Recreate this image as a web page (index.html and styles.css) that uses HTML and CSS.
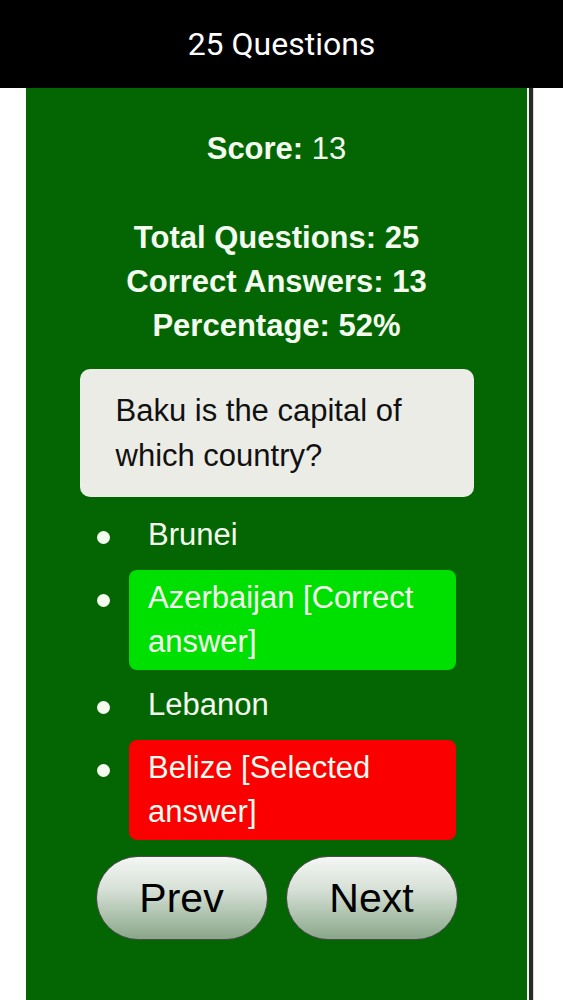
FILE: index.html
```html
<!DOCTYPE html>
<html>
<head>
<meta charset="utf-8">
<link rel="stylesheet" href="styles.css">
</head>
<body>
<header class="topbar">25 Questions</header>
<main class="panel">
  <div class="score"><b>Score:</b> 13</div>
  <div class="stats">
    <div>Total Questions: 25</div>
    <div>Correct Answers: 13</div>
    <div>Percentage: 52%</div>
  </div>
  <div class="question">Baku is the capital of which country?</div>
  <ul class="options">
    <li class="opt"><span class="dot"></span><span class="txt">Brunei</span></li>
    <li class="opt"><span class="dot"></span><span class="txt correct">Azerbaijan [Correct answer]</span></li>
    <li class="opt"><span class="dot"></span><span class="txt">Lebanon</span></li>
    <li class="opt"><span class="dot"></span><span class="txt wrong">Belize [Selected answer]</span></li>
  </ul>
  <div class="nav">
    <button class="btn">Prev</button>
    <button class="btn">Next</button>
  </div>
</main>
</body>
</html>
```
FILE: styles.css
```css
html, body {
  margin: 0;
  padding: 0;
  background: #ffffff;
  height: 100%;
}
body {
  font-family: "Liberation Sans", Arial, sans-serif;
  display: flex;
  flex-direction: column;
}
.topbar {
  height: 88px;
  background: #000;
  color: #fff;
  font-family: Roboto, "Liberation Sans", sans-serif;
  font-size: 32px;
  display: flex;
  align-items: center;
  justify-content: center;
  flex-shrink: 0;
}
.panel {
  flex: 1;
  width: 501px;
  margin-left: 26px;
  background: #036603;
  box-shadow: 2px 0 0 #eef3ee, 6px 0 1px #2a2a2a;
  color: #f4fbef;
  display: flex;
  flex-direction: column;
  align-items: center;
  padding-top: 39px;
  box-sizing: border-box;
}
.score {
  font-size: 31px;
  line-height: 44px;
}
.stats {
  margin-top: 45px;
  font-size: 31px;
  font-weight: bold;
  line-height: 44px;
  text-align: center;
}
.question {
  margin-top: 21px;
  width: 394px;
  box-sizing: border-box;
  background: #ececE7;
  color: #111;
  border-radius: 10px;
  font-size: 31px;
  line-height: 45px;
  padding: 19px 40px 19px 36px;
}
.options {
  list-style: none;
  margin: 10px 0 0 0;
  padding: 0 0 0 71px;
  align-self: stretch;
  display: flex;
  flex-direction: column;
  gap: 7px;
}
.opt {
  display: flex;
  align-items: flex-start;
}
.dot {
  width: 13px;
  height: 13px;
  border-radius: 50%;
  background: #f4fbef;
  margin-top: 24px;
  margin-right: 19px;
  flex-shrink: 0;
}
.txt {
  width: 327px;
  box-sizing: border-box;
  font-size: 31px;
  line-height: 44px;
  padding: 6px 19px;
  border-radius: 8px;
}
.correct {
  background: #00e000;
}
.wrong {
  background: #fb0000;
}
.nav {
  margin-top: 16px;
  display: flex;
  gap: 18px;
}
.btn {
  width: 172px;
  height: 84px;
  border-radius: 42px;
  border: 1.5px solid #4a4a4a;
  background: linear-gradient(#f4f6f4 0%, #d6e0d6 40%, #a8bea8 75%, #8aa78a 100%);
  font-family: "Liberation Sans", Arial, sans-serif;
  font-size: 41px;
  color: #000;
  padding: 0;
}
```
